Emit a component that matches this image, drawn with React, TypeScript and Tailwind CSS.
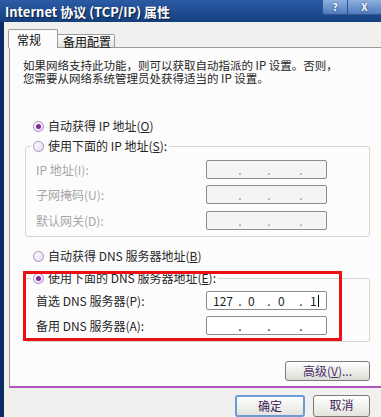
import React from "react";

const font = { fontFamily: '"Noto Sans CJK SC", "Liberation Sans", sans-serif' };

function Radio({ checked }: { checked?: boolean }) {
    return (
        <span className="w-[11px] h-[11px] rounded-full border border-[#a58bc4] bg-gradient-to-br from-[#ffffff] to-[#e9d9f0] flex items-center justify-center shrink-0">
            {checked && <span className="w-[5px] h-[5px] rounded-full bg-[#7b2a98]" />}
        </span>
    );
}

function IpBox({ value, disabled }: { value?: string[]; disabled?: boolean }) {
    const v = value ?? ["", "", "", ""];
    return (
        <div className={`w-[121px] h-[19px] rounded-[2px] border border-[#8c8c8c] flex items-center text-[12px] leading-none ${disabled ? "bg-[#f4f4f4] text-[#9a9a9a]" : "bg-white text-[#222]"}`}>
            <span className="w-[31px] pl-[6px]">{v[0]}</span>
            <span className="w-[4px] text-center">.</span>
            <span className="w-[25px] pl-[6px]">{v[1]}</span>
            <span className="w-[4px] text-center">.</span>
            <span className="w-[28px] pl-[7px]">{v[2]}</span>
            <span className="w-[4px] text-center">.</span>
            <span className="pl-[7px] flex items-center">
                {v[3]}
                {value && <span className="w-px h-[12px] bg-black ml-px" />}
            </span>
        </div>
    );
}

function Row({ label, disabled, value }: { label: string; disabled?: boolean; value?: string[] }) {
    return (
        <div className="flex items-center h-[19px]">
            <span className={`pl-[10px] w-[180px] ${disabled ? "text-[#a6a6a6]" : "text-[#262626]"}`}>{label}</span>
            <IpBox disabled={disabled} value={value} />
        </div>
    );
}

export default function App() {
    return (
        <div className="w-[381px] h-[417px] overflow-hidden bg-[#0d2c62] text-[12px] leading-[12px] text-[#262626]" style={font}>
            {/* title bar */}
            <div className="h-[22px] bg-gradient-to-b from-[#2c5ba6] to-[#15407f] flex items-start justify-between">
                <span className="text-white font-bold text-[13px] leading-[13px] mt-[5px] ml-[5px] [text-shadow:1px_1px_1px_#0a1e44]">Internet 协议 (TCP/IP) 属性</span>
                <div className="flex">
                    <div className="w-[25px] h-[15px] bg-gradient-to-b from-[#8fb0de] to-[#4f7bbf] border-l border-b border-[#30558f] rounded-bl-[3px] flex items-center justify-center text-white font-bold text-[10px] leading-[10px] [text-shadow:0_0_2px_#1b355f]">?</div>
                    <div className="w-[34px] h-[15px] bg-gradient-to-b from-[#8fb0de] to-[#4f7bbf] border-l border-b border-[#30558f] flex items-center justify-center text-white font-bold text-[10px] leading-[10px] [text-shadow:0_0_2px_#1b355f]">X</div>
                </div>
            </div>
            <div className="flex h-[395px]">
                <div className="w-[4px] bg-[#0d2c62]" />
                <div className="flex-1 bg-[#f0f0ee] pl-[5px] flex flex-col">
                    {/* tabs */}
                    <div className="flex items-end h-[26px] pt-[8px] relative z-10">
                        <div className="-ml-px w-[50px] h-[19px] bg-[#fcfcfc] border border-b-0 border-[#9a9a9a] rounded-t-[2px] pl-[8px] pt-[4px] text-[12px] leading-[12px] text-[#111]">常规</div>
                        <div className="w-[57px] h-[14px] bg-gradient-to-b from-[#ffffff] to-[#e2e2de] border border-l-0 border-[#9a9a9a] rounded-tr-[2px] pl-[5px] pt-[1px] text-[12px] leading-[12px] text-[#111]">备用配置</div>
                    </div>
                    {/* panel */}
                    <div className="h-[350px] -mt-px bg-[#fcfcfc] border-l border-t border-[#9a9a9a] border-b-2 border-b-[#b255c0] relative">
                        <p className="pl-[13px] pt-[11px] text-[11.5px] leading-[13px] text-[#262626]">
                            如果网络支持此功能，则可以获取自动指派的 IP 设置。否则，<br />
                            您需要从网络系统管理员处获得适当的 IP 设置。
                        </p>
                        <div className="ml-[15px] w-[345px]">
                            <div className="flex items-center gap-[4px] h-[14px] mt-[34px] pl-[8px]">
                                <Radio checked />
                                <span>自动获得 IP 地址(<u>O</u>)</span>
                            </div>
                            <fieldset className="mt-[6px] border border-[#d6d6d0] rounded-[3px] pb-[6px]">
                                <legend className="ml-[5px] px-[2px] h-[14px] flex items-center gap-[4px]">
                                    <Radio />
                                    <span>使用下面的 IP 地址(<u>S</u>):</span>
                                </legend>
                                <div className="mt-[7px]"><Row label="IP 地址(I):" disabled /></div>
                                <div className="mt-[6px]"><Row label="子网掩码(U):" disabled /></div>
                                <div className="mt-[7px]"><Row label="默认网关(D):" disabled /></div>
                            </fieldset>
                            <div className="flex items-center gap-[4px] h-[14px] mt-[12px] pl-[8px]">
                                <Radio />
                                <span>自动获得 DNS 服务器地址(<u>B</u>)</span>
                            </div>
                            <fieldset className="mt-[8px] border border-[#d6d6d0] rounded-[3px] pb-[6px]">
                                <legend className="ml-[5px] px-[2px] h-[14px] flex items-center gap-[4px]">
                                    <Radio checked />
                                    <span>使用下面的 DNS 服务器地址(<u>E</u>):</span>
                                </legend>
                                <div className="mt-[6px]"><Row label="首选 DNS 服务器(P):" value={["127", "0", "0", "1"]} /></div>
                                <div className="mt-[6px]"><Row label="备用 DNS 服务器(A):" /></div>
                            </fieldset>
                            <div className="flex justify-end mt-[19px]">
                                <div className="w-[85px] h-[20px] rounded-[3px] border border-[#7a7a7a] bg-gradient-to-b from-[#ffffff] to-[#dcdcd6] flex items-center justify-center text-[#4a2e66]">高级(<u>V</u>)...</div>
                            </div>
                        </div>
                        {/* annotation */}
                        <div className="absolute left-[13px] top-[223px] w-[319px] h-[70px] border-[3px] border-[#ec0f14] pointer-events-none" />
                    </div>
                    {/* bottom buttons */}
                    <div className="flex mt-[7px] pl-[226px] gap-[8px]">
                        <div className="w-[70px] h-[22px] rounded-[3px] border-2 border-[#6d9bd6] bg-gradient-to-b from-[#ffffff] to-[#e4e4de] flex justify-center pt-[3px] text-[12px] leading-[12px] text-[#3b2357]">确定</div>
                        <div className="w-[57px] h-[22px] rounded-[3px] border border-[#7a7a7a] bg-gradient-to-b from-[#ffffff] to-[#e4e4de] flex justify-center pt-[3px] text-[12px] leading-[12px] text-[#3b2357]">取消</div>
                    </div>
                </div>
            </div>
        </div>
    );
}
